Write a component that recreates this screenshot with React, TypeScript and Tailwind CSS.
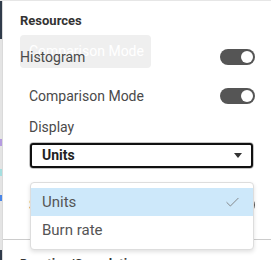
import { Check } from "lucide-react";

function Toggle() {
  return (
    <div className="flex h-[16px] w-[35px] items-center justify-end rounded-full bg-[#555555] px-[2px]">
      <div className="h-[12px] w-[12px] rounded-full bg-white" />
    </div>
  );
}

function Row({ label, className }: { label: string; className?: string }) {
  return (
    <div className={"flex h-[20px] items-center justify-between " + (className ?? "")}>
      <span className="text-[14px] text-[#4a4a4a]">{label}</span>
      <Toggle />
    </div>
  );
}

export default function App() {
  return (
    <div
      className="relative flex h-[260px] w-[271px] overflow-hidden border-t border-[#e6e6e6] bg-white"
      style={{ fontFamily: "Roboto, 'Liberation Sans', sans-serif" }}
    >
      {/* edge of the neighbouring pane */}
      <div className="flex w-[2px] flex-col">
        <div className="h-[38px] bg-[#2f3b4a]" />
        <div className="h-[100px] bg-[#e4e4e4]" />
        <div className="h-[7px] bg-[#b59be0]" />
        <div className="h-[23px] bg-[#e4e4e4]" />
        <div className="h-[7px] bg-[#a6dfe0]" />
        <div className="h-[19px] bg-[#e4e4e4]" />
        <div className="h-[6px] bg-[#4a86e8]" />
        <div className="h-[49px] bg-[#e4e4e4]" />
        <div className="flex-1 bg-[#2f3b4a]" />
      </div>
      <div className="w-px bg-[#dadada]" />

      <div className="flex flex-1 flex-col">
        <div className="relative z-10 flex flex-col pl-[17px] pr-[16px] pt-[12px]">
          <div className="h-[16px] text-[13px] font-bold leading-[16px] text-[#333333]">Resources</div>
          <Row label="Histogram" className="mt-[18px]" />
          <div className="flex flex-col pl-[9px]">
            <Row label="Comparison Mode" className="mt-[19px]" />
            <div className="mt-[11px] flex h-[20px] items-center text-[14px] text-[#4a4a4a]">Display</div>
            <div className="mr-[1px] mt-[5px] h-[27px] rounded-[4px] border border-[#c4c4c4]">
              <div className="flex h-full items-center justify-between rounded-[3px] border-2 border-[#111111] pl-[10px] pr-[9px]">
                <span className="text-[14px] font-bold text-[#222222]">Units</span>
                <svg width="8" height="5" viewBox="0 0 8 5">
                  <path d="M0 0 L8 0 L4 5 Z" fill="#333333" />
                </svg>
              </div>
            </div>
            <Row label="Stacked" className="mt-[26px]" />
          </div>
        </div>
        <div className="mt-[24px] border-t border-[#cccccc] pl-[17px] pt-[14px]">
          <div className="text-[13px] font-bold text-[#333333]">Duration/Cumulative</div>
        </div>
      </div>

      {/* drag ghost */}
      <div className="absolute left-[20px] top-[34px] flex h-[33px] w-[131px] items-center rounded-[4px] bg-[#efefef] pl-[9px] text-[14px] text-white">
        Comparison Mode
      </div>

      {/* open select menu */}
      <div className="absolute left-[30px] top-[181px] z-20 flex w-[224px] flex-col rounded-[4px] border border-[#dddddd] bg-white py-[5px] shadow-[0_2px_4px_rgba(0,0,0,0.12)]">
        <div className="flex h-[28px] items-center justify-between bg-[#cde8fa] pl-[11px] pr-[12px] text-[15px] text-[#555555]">
          <span>Units</span>
          <Check size={17} strokeWidth={1.2} color="#777777" />
        </div>
        <div className="flex h-[28px] items-center pl-[11px] text-[15px] text-[#555555]">Burn rate</div>
      </div>
    </div>
  );
}
